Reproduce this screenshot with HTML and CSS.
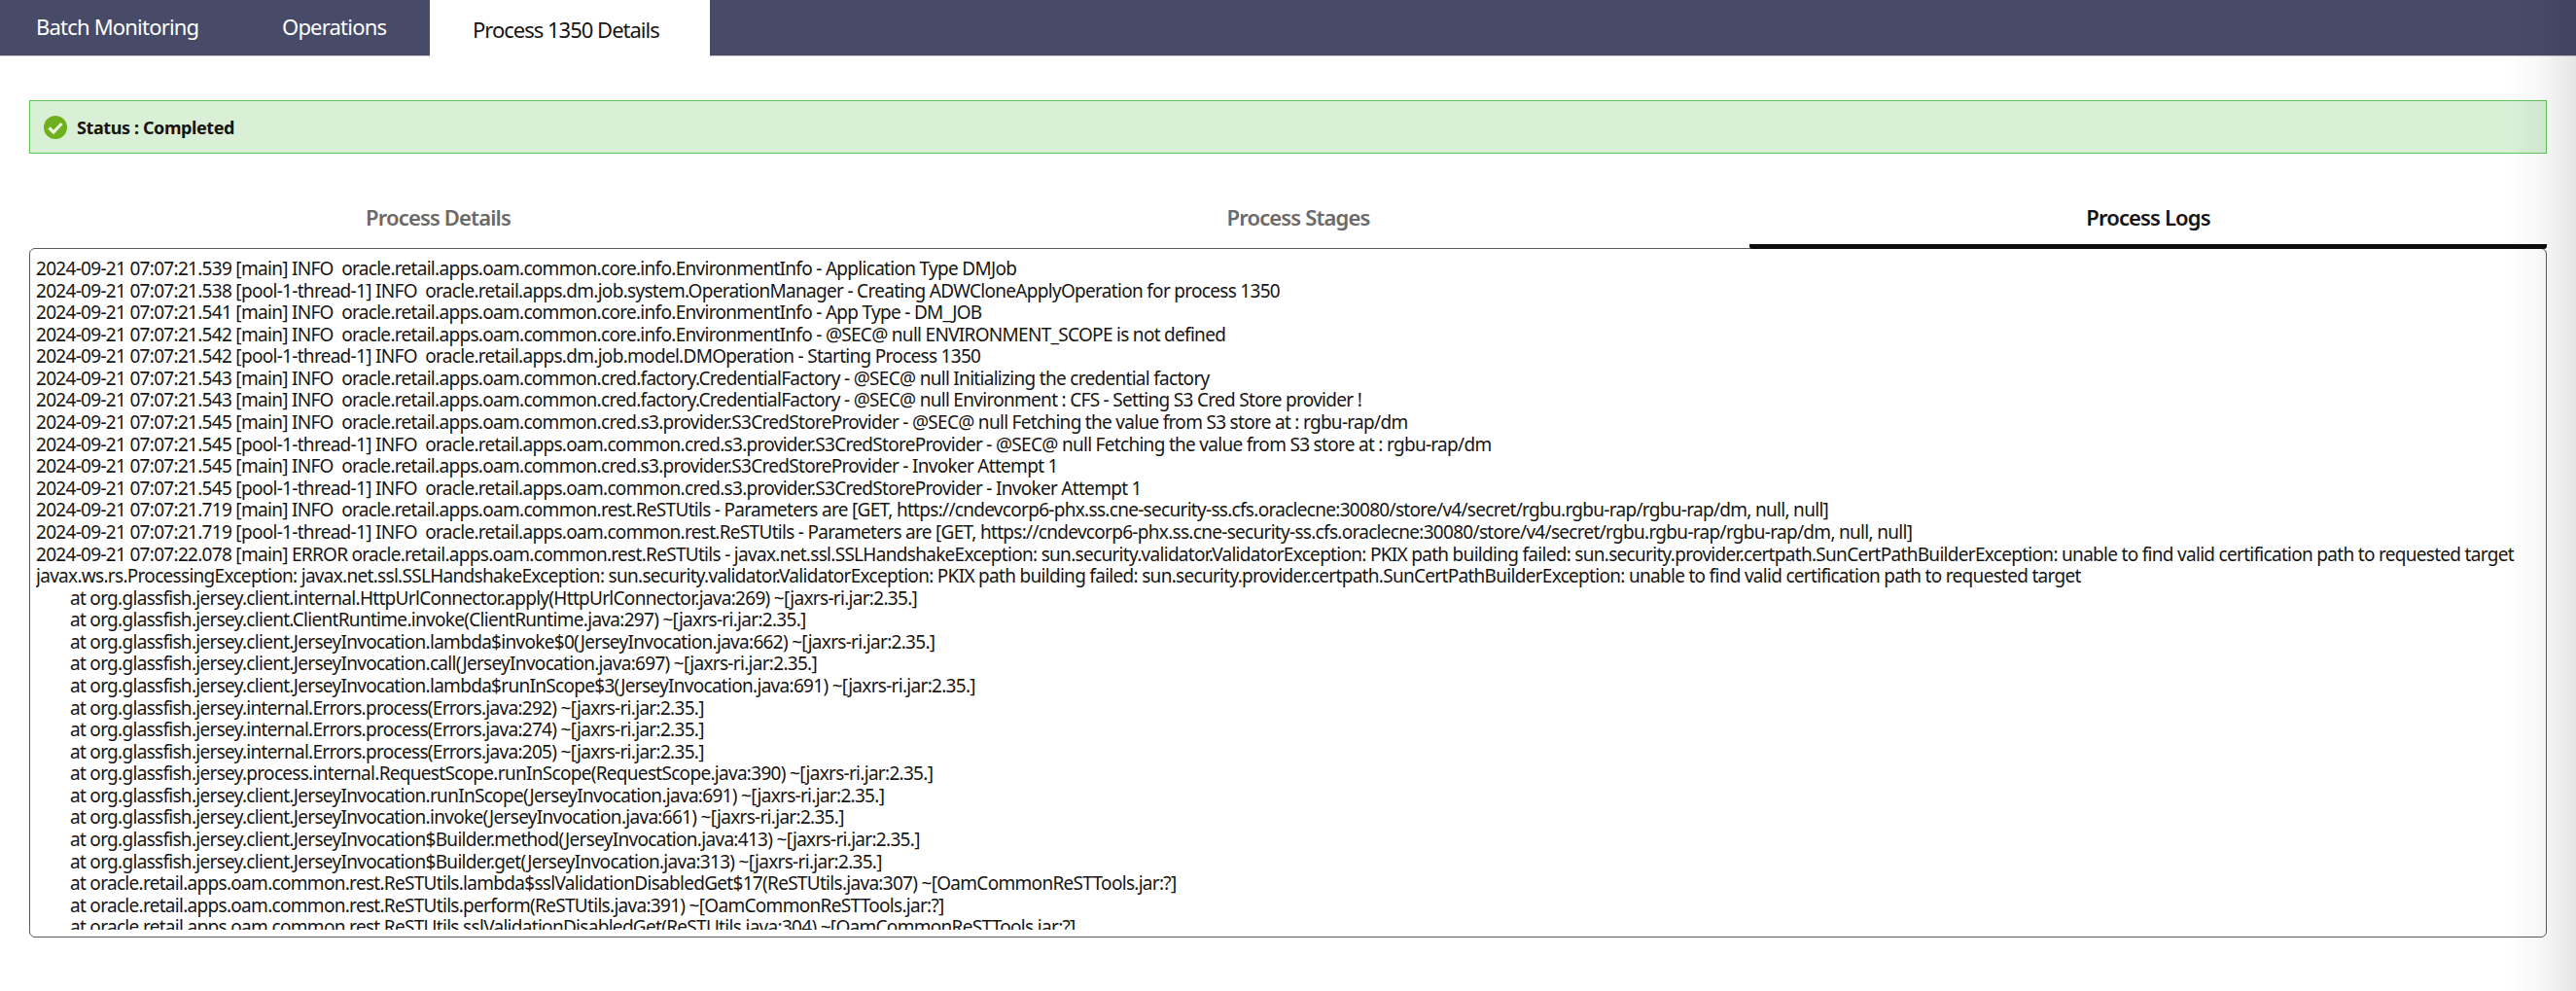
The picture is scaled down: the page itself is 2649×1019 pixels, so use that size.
FILE: index.html
```html
<!DOCTYPE html>
<html lang="en">
<head>
<meta charset="utf-8">
<title>Process 1350 Details</title>
<link rel="stylesheet" href="styles.css">
</head>
<body>
<nav class="topnav">
  <a class="topnav-tab topnav-tab-first">Batch Monitoring</a>
  <a class="topnav-tab topnav-tab-second">Operations</a>
  <a class="topnav-tab topnav-tab-active">Process 1350 Details</a>
</nav>
<main class="content">
  <section class="status">
    <svg class="status-icon" viewBox="0 0 24 24" aria-hidden="true">
      <circle cx="12" cy="12" r="12" fill="#6fb01e"/>
      <path d="M5.5 12.5 L10 17 L18.5 8" fill="none" stroke="#e9f5dc" stroke-width="3.2"/>
    </svg>
    <span class="status-text">Status : Completed</span>
  </section>
  <div class="subtabs">
    <div class="subtab">Process Details</div>
    <div class="subtab">Process Stages</div>
    <div class="subtab subtab-active">Process Logs</div>
  </div>
  <div class="logbox">
    <div class="log-scroll">
    <div class="log-line">2024-09-21 07:07:21.539 [main] INFO  oracle.retail.apps.oam.common.core.info.EnvironmentInfo - Application Type DMJob</div>
    <div class="log-line">2024-09-21 07:07:21.538 [pool-1-thread-1] INFO  oracle.retail.apps.dm.job.system.OperationManager - Creating ADWCloneApplyOperation for process 1350</div>
    <div class="log-line">2024-09-21 07:07:21.541 [main] INFO  oracle.retail.apps.oam.common.core.info.EnvironmentInfo - App Type - DM_JOB</div>
    <div class="log-line">2024-09-21 07:07:21.542 [main] INFO  oracle.retail.apps.oam.common.core.info.EnvironmentInfo - @SEC@ null ENVIRONMENT_SCOPE is not defined</div>
    <div class="log-line">2024-09-21 07:07:21.542 [pool-1-thread-1] INFO  oracle.retail.apps.dm.job.model.DMOperation - Starting Process 1350</div>
    <div class="log-line">2024-09-21 07:07:21.543 [main] INFO  oracle.retail.apps.oam.common.cred.factory.CredentialFactory - @SEC@ null Initializing the credential factory</div>
    <div class="log-line">2024-09-21 07:07:21.543 [main] INFO  oracle.retail.apps.oam.common.cred.factory.CredentialFactory - @SEC@ null Environment : CFS - Setting S3 Cred Store provider !</div>
    <div class="log-line">2024-09-21 07:07:21.545 [main] INFO  oracle.retail.apps.oam.common.cred.s3.provider.S3CredStoreProvider - @SEC@ null Fetching the value from S3 store at : rgbu-rap/dm</div>
    <div class="log-line">2024-09-21 07:07:21.545 [pool-1-thread-1] INFO  oracle.retail.apps.oam.common.cred.s3.provider.S3CredStoreProvider - @SEC@ null Fetching the value from S3 store at : rgbu-rap/dm</div>
    <div class="log-line">2024-09-21 07:07:21.545 [main] INFO  oracle.retail.apps.oam.common.cred.s3.provider.S3CredStoreProvider - Invoker Attempt 1</div>
    <div class="log-line">2024-09-21 07:07:21.545 [pool-1-thread-1] INFO  oracle.retail.apps.oam.common.cred.s3.provider.S3CredStoreProvider - Invoker Attempt 1</div>
    <div class="log-line">2024-09-21 07:07:21.719 [main] INFO  oracle.retail.apps.oam.common.rest.ReSTUtils - Parameters are [GET, https://cndevcorp6-phx.ss.cne-security-ss.cfs.oraclecne:30080/store/v4/secret/rgbu.rgbu-rap/rgbu-rap/dm, null, null]</div>
    <div class="log-line">2024-09-21 07:07:21.719 [pool-1-thread-1] INFO  oracle.retail.apps.oam.common.rest.ReSTUtils - Parameters are [GET, https://cndevcorp6-phx.ss.cne-security-ss.cfs.oraclecne:30080/store/v4/secret/rgbu.rgbu-rap/rgbu-rap/dm, null, null]</div>
    <div class="log-line">2024-09-21 07:07:22.078 [main] ERROR oracle.retail.apps.oam.common.rest.ReSTUtils - javax.net.ssl.SSLHandshakeException: sun.security.validator.ValidatorException: PKIX path building failed: sun.security.provider.certpath.SunCertPathBuilderException: unable to find valid certification path to requested target</div>
    <div class="log-line">javax.ws.rs.ProcessingException: javax.net.ssl.SSLHandshakeException: sun.security.validator.ValidatorException: PKIX path building failed: sun.security.provider.certpath.SunCertPathBuilderException: unable to find valid certification path to requested target</div>
    <div class="log-line log-stack">at org.glassfish.jersey.client.internal.HttpUrlConnector.apply(HttpUrlConnector.java:269) ~[jaxrs-ri.jar:2.35.]</div>
    <div class="log-line log-stack">at org.glassfish.jersey.client.ClientRuntime.invoke(ClientRuntime.java:297) ~[jaxrs-ri.jar:2.35.]</div>
    <div class="log-line log-stack">at org.glassfish.jersey.client.JerseyInvocation.lambda$invoke$0(JerseyInvocation.java:662) ~[jaxrs-ri.jar:2.35.]</div>
    <div class="log-line log-stack">at org.glassfish.jersey.client.JerseyInvocation.call(JerseyInvocation.java:697) ~[jaxrs-ri.jar:2.35.]</div>
    <div class="log-line log-stack">at org.glassfish.jersey.client.JerseyInvocation.lambda$runInScope$3(JerseyInvocation.java:691) ~[jaxrs-ri.jar:2.35.]</div>
    <div class="log-line log-stack">at org.glassfish.jersey.internal.Errors.process(Errors.java:292) ~[jaxrs-ri.jar:2.35.]</div>
    <div class="log-line log-stack">at org.glassfish.jersey.internal.Errors.process(Errors.java:274) ~[jaxrs-ri.jar:2.35.]</div>
    <div class="log-line log-stack">at org.glassfish.jersey.internal.Errors.process(Errors.java:205) ~[jaxrs-ri.jar:2.35.]</div>
    <div class="log-line log-stack">at org.glassfish.jersey.process.internal.RequestScope.runInScope(RequestScope.java:390) ~[jaxrs-ri.jar:2.35.]</div>
    <div class="log-line log-stack">at org.glassfish.jersey.client.JerseyInvocation.runInScope(JerseyInvocation.java:691) ~[jaxrs-ri.jar:2.35.]</div>
    <div class="log-line log-stack">at org.glassfish.jersey.client.JerseyInvocation.invoke(JerseyInvocation.java:661) ~[jaxrs-ri.jar:2.35.]</div>
    <div class="log-line log-stack">at org.glassfish.jersey.client.JerseyInvocation$Builder.method(JerseyInvocation.java:413) ~[jaxrs-ri.jar:2.35.]</div>
    <div class="log-line log-stack">at org.glassfish.jersey.client.JerseyInvocation$Builder.get(JerseyInvocation.java:313) ~[jaxrs-ri.jar:2.35.]</div>
    <div class="log-line log-stack">at oracle.retail.apps.oam.common.rest.ReSTUtils.lambda$sslValidationDisabledGet$17(ReSTUtils.java:307) ~[OamCommonReSTTools.jar:?]</div>
    <div class="log-line log-stack">at oracle.retail.apps.oam.common.rest.ReSTUtils.perform(ReSTUtils.java:391) ~[OamCommonReSTTools.jar:?]</div>
    <div class="log-line log-stack">at oracle.retail.apps.oam.common.rest.ReSTUtils.sslValidationDisabledGet(ReSTUtils.java:304) ~[OamCommonReSTTools.jar:?]</div>
    </div>
  </div>
</main>
<div class="edge-shade"></div>
</body>
</html>
```
FILE: styles.css
```css
html, body {
  margin: 0;
  background: #fff;
  height: 1019px;
  overflow: hidden;
}
body {
  font-family: "Noto Sans", "Open Sans", sans-serif;
  color: #161513;
}
.topnav {
  display: flex;
  height: 58px;
  box-sizing: border-box;
  background: #474b68;
  border-bottom: 1px solid #c9c9d2;
}
.topnav-tab {
  display: block;
  font-size: 22px;
  letter-spacing: -0.8px;
  line-height: 54px;
  color: #fff;
}
.topnav-tab-first { margin-left: 37px; width: 253px; }
.topnav-tab-second { width: 152px; }
.topnav-tab-active {
  width: 288px;
  height: 58px;
  box-sizing: border-box;
  padding-left: 44px;
  background: #fff;
  color: #161513;
  letter-spacing: -1px;
  line-height: 60px;
}
.content {
  padding: 45px 30px 0 30px;
}
.status {
  display: flex;
  align-items: center;
  gap: 10px;
  height: 55px;
  box-sizing: border-box;
  padding-left: 14px;
  background: #d9efd6;
  border: 1px solid #5fc55b;
}
.status-icon { width: 24px; height: 24px; flex: none; }
.status-text {
  font-size: 18px;
  font-weight: 700;
  letter-spacing: -0.4px;
}
.subtabs {
  display: grid;
  grid-template-columns: 841px 928px 1fr;
  height: 98px;
  box-sizing: border-box;
  padding-top: 49px;
}
.subtab {
  text-align: center;
  font-size: 22px;
  font-weight: 600;
  letter-spacing: -0.85px;
  line-height: 32px;
  color: #6b6a68;
}
.subtab-active {
  color: #161513;
  height: 49px;
  border-bottom: 5px solid #0d0d0d;
  border-radius: 0 0 3px 3px;
  box-sizing: border-box;
}
.logbox {
  height: 709px;
  box-sizing: border-box;
  padding: 9px 6px 6px 6px;
  margin-top: -1px;
  border: 1.5px solid #5a5a5a;
  border-radius: 6px;
  background: #fff;
}
.log-scroll {
  height: 691px;
  overflow: hidden;
}
.log-line {
  font-size: 19px;
  line-height: 22.58px;
  letter-spacing: -0.7px;
  white-space: pre;
}
.log-stack { padding-left: 35px; }
.edge-shade {
  position: absolute;
  top: 0;
  right: 0;
  width: 71px;
  height: 1019px;
  pointer-events: none;
  background: linear-gradient(to right, rgba(0,0,0,0) 0%, rgba(0,0,0,0.03) 50%, rgba(0,0,0,0.1) 100%);
}
```
